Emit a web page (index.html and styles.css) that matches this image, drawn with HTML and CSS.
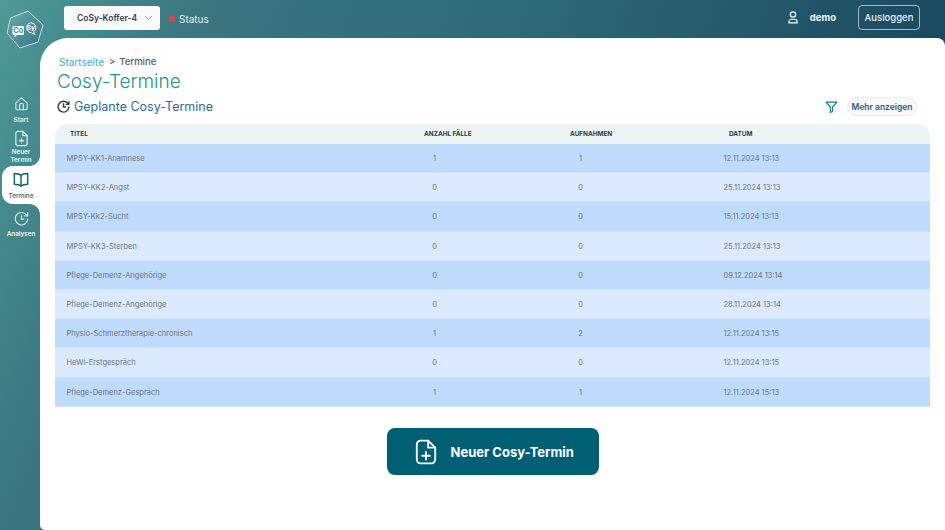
FILE: index.html
```html
<!DOCTYPE html>
<html lang="de">
<head>
<meta charset="utf-8">
<title>Cosy-Termine</title>
<link rel="stylesheet" href="styles.css">
</head>
<body>
<div class="app">
  <aside class="side">
    <div class="logo">
      <svg width="40" height="40" viewBox="0 0 40 40">
        <defs><linearGradient id="lg" x1="0" y1="0" x2="1" y2="1"><stop offset="0" stop-color="#62aea8"/><stop offset="1" stop-color="#3a7287"/></linearGradient></defs>
        <path d="M23 1 L38 15 L33 32 L15 38 L2 23 L5.500 8 Z" fill="url(#lg)" stroke="#c6dfe0" stroke-width="1" stroke-linejoin="round"/>
        <path d="M25.800 12.800 a5 5 0 0 1 3 9 l1.200 3 l-3.500 -2.100 a5 5 0 0 1 -.7 -9.900z" fill="none" stroke="#fff" stroke-width=".9" stroke-linejoin="round"/>
        <path d="M9 16 h8.500 a1.500 1.500 0 0 1 1.500 1.500 v6 a1.500 1.500 0 0 1 -1.500 1.500 h-5.500 l-2.500 2.500 v-2.500 h-.5 a1.500 1.500 0 0 1 -1.500 -1.500 v-6 a1.500 1.500 0 0 1 1.500 -1.500z" fill="#fff"/>
        <text x="13.300" y="23.300" class="logo-co">Co</text>
        <text x="25.800" y="20.200" class="logo-sy">Sy</text>
      </svg>
    </div>
    <nav class="nav">
      <a class="nav-item nav-start">
        <svg width="15" height="15" viewBox="0 0 24 24" fill="none" stroke="#d7e8e8" stroke-width="1.800" stroke-linejoin="round"><path d="M3 11 12 3l9 8v9a2 2 0 0 1-2 2H5a2 2 0 0 1-2-2z"/><path d="M9 22v-8a2 2 0 0 1 2-2h2a2 2 0 0 1 2 2v8"/></svg>
        <span>Start</span>
      </a>
      <a class="nav-item nav-new">
        <svg width="15" height="17" viewBox="0 0 20 24" fill="none" stroke="#d7e8e8" stroke-width="1.800" stroke-linejoin="round" stroke-linecap="round"><path d="M12 2H5a3 3 0 0 0-3 3v14a3 3 0 0 0 3 3h10a3 3 0 0 0 3-3V8z"/><path d="M12 2v6h6M10 12v6M7 15h6"/></svg>
        <span>Neuer<br>Termin</span>
      </a>
      <a class="nav-item nav-active">
        <svg width="16" height="15" viewBox="0 0 24 22" fill="none" stroke="#0f6378" stroke-width="2.200" stroke-linejoin="round"><path d="M12 5C10 2.800 7 2 2 2v16c5 0 8 .8 10 3 2-2.200 5-3 10-3V2c-5 0-8 .8-10 3z"/><path d="M12 5v16"/></svg>
        <span>Termine</span>
      </a>
      <a class="nav-item nav-next">
        <svg width="15" height="15" viewBox="0 0 24 24" fill="none" stroke="#d7e8e8" stroke-width="1.800" stroke-linecap="round" stroke-linejoin="round"><path d="M20.500 7A10 10 0 1 0 22 13"/><path d="M22 3v5h-5"/><path d="M12 7v6h4"/></svg>
        <span>Analysen</span>
      </a>
    </nav>
  </aside>
  <div class="main">
    <header class="top">
      <div class="top-left">
        <div class="select">CoSy-Koffer-4
          <svg width="9" height="6" viewBox="0 0 9 6" fill="none" stroke="#9aa3a8" stroke-width="1"><path d="M1 1l3.500 3.500L8 1"/></svg>
        </div>
        <div class="status"><i class="dot"></i>Status</div>
      </div>
      <div class="top-right">
        <svg width="12" height="13" viewBox="0 0 20 22" fill="none" stroke="#fff" stroke-width="2"><circle cx="10" cy="6" r="4.500"/><path d="M3 20v-1.500A4.500 4.500 0 0 1 7.500 14h5a4.500 4.500 0 0 1 4.500 4.500V20z" stroke-linejoin="round"/></svg>
        <span class="user">demo</span>
        <button class="logout">Ausloggen</button>
      </div>
    </header>
    <main class="panel">
      <div class="crumbs"><span class="crumb-link">Startseite</span><span class="crumb-sep">&gt;</span><span>Termine</span></div>
      <h1>Cosy-Termine</h1>
      <div class="subhead">
        <h2>
          <svg width="13" height="13" viewBox="0 0 24 24" fill="none" stroke="#33404a" stroke-width="2.600" stroke-linecap="round" stroke-linejoin="round"><path d="M20.500 7A10 10 0 1 0 22 13"/><path d="M22 3v5h-5"/><path d="M12 7v6h4"/></svg>
          Geplante Cosy-Termine
        </h2>
        <div class="tools">
          <span class="filter">
            <svg width="13" height="12" viewBox="0 0 24 22" fill="none" stroke="#1f7f93" stroke-width="2.300" stroke-linejoin="round"><path d="M2 2h20l-8 9v8l-4 2V11z"/></svg>
          </span>
          <button class="more">Mehr anzeigen</button>
        </div>
      </div>
      <div class="table">
        <div class="row head"><span>TITEL</span><span>ANZAHL FÄLLE</span><span>AUFNAHMEN</span><span>DATUM</span></div>
        <div class="row body-row"><span>MPSY-KK1-Anamnese</span><span>1</span><span>1</span><span>12.11.2024 13:13</span></div>
        <div class="row body-row"><span>MPSY-KK2-Angst</span><span>0</span><span>0</span><span>25.11.2024 13:13</span></div>
        <div class="row body-row"><span>MPSY-Kk2-Sucht</span><span>0</span><span>0</span><span>15.11.2024 13:13</span></div>
        <div class="row body-row"><span>MPSY-KK3-Sterben</span><span>0</span><span>0</span><span>25.11.2024 13:13</span></div>
        <div class="row body-row"><span>Pflege-Demenz-Angehörige</span><span>0</span><span>0</span><span>09.12.2024 13:14</span></div>
        <div class="row body-row"><span>Pflege-Demenz-Angehörige</span><span>0</span><span>0</span><span>28.11.2024 13:14</span></div>
        <div class="row body-row"><span>Physio-Schmerztherapie-chronisch</span><span>1</span><span>2</span><span>12.11.2024 13:15</span></div>
        <div class="row body-row"><span>HeWi-Erstgespräch</span><span>0</span><span>0</span><span>12.11.2024 13:15</span></div>
        <div class="row body-row"><span>Pflege-Demenz-Gespräch</span><span>1</span><span>1</span><span>12.11.2024 15:13</span></div>
      </div>
      <div class="cta-wrap">
        <button class="cta">
          <svg width="22" height="26" viewBox="0 0 20 24" fill="none" stroke="#fff" stroke-width="1.700" stroke-linejoin="round" stroke-linecap="round"><path d="M12 1.500H5A3.500 3.500 0 0 0 1.500 5v14A3.500 3.500 0 0 0 5 22.500h10a3.500 3.500 0 0 0 3.500-3.500V8z"/><path d="M12 1.500V8h6.500M10 12v7M6.500 15.500h7"/></svg>
          Neuer Cosy-Termin
        </button>
      </div>
    </main>
  </div>
</div>
</body>
</html>
```
FILE: styles.css
```css
* { box-sizing: border-box; }
html, body { margin: 0; height: 100%; overflow: hidden; }
body { font-family: Inter, "Liberation Sans", sans-serif; }
.app {
  display: flex;
  width: 945px;
  height: 530px;
  background: linear-gradient(112deg, #4e9a97 0%, #3a7580 18%, #2e6a78 45%, #1c4a60 82%, #1c4a60 100%);
}
.side { width: 40px; flex: none; display: flex; flex-direction: column; }
.logo { height: 50px; padding: 10px 0 0 5px; flex: none; }
.logo-co { font: 700 7.500px Inter, sans-serif; fill: #3f8e90; text-anchor: middle; }
.logo-sy { font: 700 6.500px Inter, sans-serif; fill: #fff; text-anchor: middle; }
.nav { display: flex; flex-direction: column; margin-top: 46px; }
.nav-item {
  display: flex; flex-direction: column; align-items: center;
  color: #eef6f6; font-size: 6.300px; font-weight: 600; text-align: center; line-height: 8px;
}
.nav-item span { display: block; }
.nav-start { height: 34px; gap: 5px; padding-left: 2px; }
.nav-new { height: 36px; gap: 1px; padding-left: 2px; }
.nav-active {
  position: relative;
  height: 38px; width: 38px; margin-left: 2px; padding-top: 6px; gap: 5px;
  background: #fff; color: #3c7a8a; border-radius: 11px 0 0 11px;
}
.nav-active::before, .nav-active::after {
  content: ""; position: absolute; right: 0; width: 10px; height: 10px;
}
.nav-active::before { top: -10px; background: radial-gradient(circle at 0 0, transparent 9.500px, #fff 10px); }
.nav-active::after { bottom: -10px; background: radial-gradient(circle at 0 100%, transparent 9.500px, #fff 10px); }
.nav-next { height: 38px; padding: 7px 0 0 2px; gap: 4px; }
.main { flex: 1; min-width: 0; display: flex; flex-direction: column; }
.top { height: 38px; flex: none; display: flex; justify-content: space-between; padding: 6px 25px 0 24px; }
.top-left { display: flex; align-items: flex-start; gap: 9px; }
.select {
  width: 96px; height: 24px; background: #fafafa; border-radius: 3px;
  display: flex; align-items: center; justify-content: space-between; padding: 0 7px 0 13px;
  font-size: 8.500px; font-weight: 600; color: #353f48;
}
.status { display: flex; align-items: center; height: 26px; color: #e2eeee; font-size: 10px; gap: 4px; }
.dot { width: 6px; height: 6px; background: #f03a47; border-radius: 50%; }
.top-right { display: flex; align-items: flex-start; }
.top-right svg { margin: 5px 0 0 0; }
.user { color: #f2f7f7; font-size: 9.500px; font-weight: 700; margin: 6px 22px 0 11px; }
.logout {
  width: 62px; height: 25px; margin-top: -1px; background: transparent;
  border: 1px solid #9fc0c6; border-radius: 4px; color: #eaf2f3;
  font: 500 9.500px Inter, sans-serif; padding: 0;
}
.panel {
  flex: 1; min-height: 0; background: #fff; border-radius: 28px 8px 0 5px; padding: 17px 15px 0 15px;
}
.crumbs { display: flex; font-size: 9.500px; line-height: 14px; color: #555d66; padding-left: 4px; font-weight: 500; }
.crumb-link { color: #3fabd8; font-weight: 400; font-size: 10px; }
.crumb-sep { margin: 0 4px 0 5px; }
h1 { margin: 0 0 0 2px; font-size: 19px; font-weight: 300; line-height: 26px; color: #1f9587; }
.subhead { display: flex; justify-content: space-between; align-items: center; height: 23px; padding-right: 13px; }
h2 { margin: 0 0 0 2px; font-size: 12.500px; font-weight: 400; color: #2f6a8f; display: flex; align-items: center; gap: 4px; }
.tools { display: flex; align-items: center; gap: 7px; }
.filter { width: 18px; height: 18px; border-radius: 50%; background: #fafafa; display: flex; align-items: center; justify-content: center; }
.more {
  width: 70px; height: 19px; background: #fafafa; border: 1px solid #e8ecee; border-radius: 10px;
  font: 600 8.500px Inter, sans-serif; color: #2b5f7d; padding: 0;
}
.table { margin-top: 6px; }
.row { display: grid; grid-template-columns: 340px 140px 145px 1fr; align-items: center; }
.head {
  height: 20px; background: #ecf5f3; border-radius: 12px 12px 0 0; padding: 0 0 1px 15px;
  font-size: 6.400px; font-weight: 700; color: #2b3a44;
}
.head span:nth-child(2) { padding-left: 14px; }
.head span:nth-child(3) { padding-left: 20px; }
.head span:nth-child(4) { padding-left: 34px; }
.body-row { height: 29.200px; padding: 1px 0 0 11.500px; font-size: 7.500px; color: #6a7480; background: #bfdbfe; border-bottom: 1px solid #d2e3f6; }
.body-row:nth-child(odd) { background: #dbeafe; }
.body-row span:nth-child(2) { width: 32px; margin-left: 12px; text-align: center; }
.body-row span:nth-child(3) { width: 32px; margin-left: 18px; text-align: center; }
.body-row span:nth-child(4) { padding-left: 32px; }
.cta-wrap { display: flex; justify-content: center; margin-top: 21px; }
.cta {
  width: 212px; height: 47px; background: #005f73; border: none; border-radius: 8px;
  color: #fff; font: 700 13px Inter, sans-serif; display: flex; align-items: center; gap: 14px; padding: 1px 0 0 28px;
}
```
